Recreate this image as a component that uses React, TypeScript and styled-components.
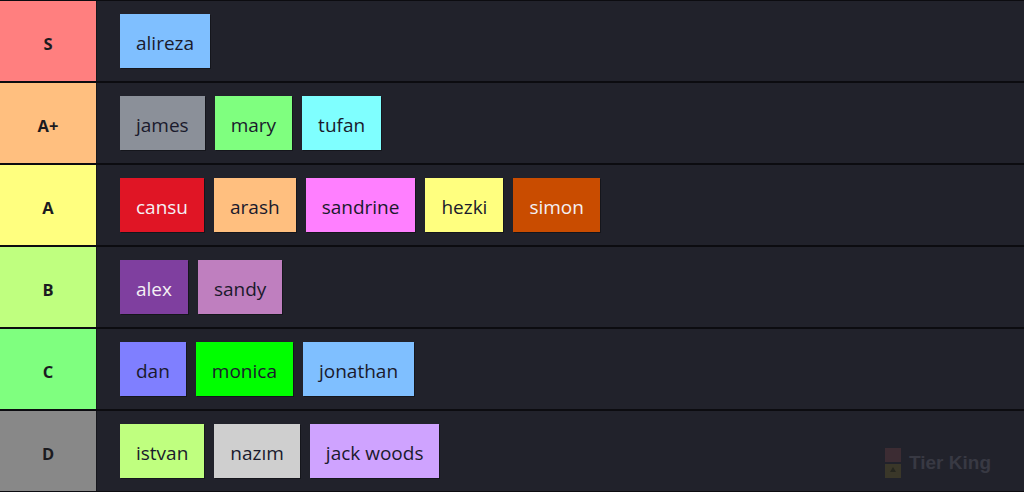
import { createGlobalStyle, styled } from 'styled-components';

const GlobalStyle = createGlobalStyle`
  html, body {
    margin: 0;
    padding: 0;
    background: #21222b;
  }
  body {
    font-family: 'Open Sans', 'Noto Sans', sans-serif;
  }
`;

const StyledBoard = styled.div`
  position: relative;
  display: flex;
  flex-direction: column;
  gap: 2px;
  width: 1024px;
  height: 492px;
  box-sizing: border-box;
  padding: 1px 0;
  background: #0c0c10;
  overflow: hidden;
`;

const StyledRow = styled.div`
  display: flex;
  height: 80px;
  background: #21222b;
`;

const StyledLabel = styled.div<{ $bg: string }>`
  display: flex;
  align-items: center;
  justify-content: center;
  width: 97px;
  flex-shrink: 0;
  padding-top: 4px;
  box-sizing: border-box;
  background: ${(p) => p.$bg};
  border-right: 1px solid #16171d;
  color: #1b1b1f;
  font-weight: 700;
  font-size: 16.5px;
`;

const StyledItems = styled.div`
  display: flex;
  align-items: center;
  gap: 10px;
  padding-left: 23px;
`;

const StyledTag = styled.div<{ $bg: string; $light?: boolean }>`
  display: flex;
  align-items: center;
  height: 54px;
  padding: 3px 16px 0;
  box-sizing: border-box;
  background: ${(p) => p.$bg};
  color: ${(p) => (p.$light ? '#f4f0f4' : '#1a1a2c')};
  font-size: 19px;
  box-shadow: 1px 1px 0 rgba(0, 0, 0, 0.35);
`;

const StyledWatermark = styled.div`
  position: absolute;
  right: 33px;
  bottom: 14px;
  display: flex;
  align-items: center;
  gap: 8px;
  color: #383943;
  font-family: 'Liberation Sans', Arial, sans-serif;
  font-weight: 700;
  font-size: 19px;
`;

interface Item {
  name: string;
  color: string;
  light?: boolean;
}

interface Tier {
  label: string;
  color: string;
  items: Item[];
}

const tiers: Tier[] = [
  { label: 'S', color: '#ff7f7f', items: [{ name: 'alireza', color: '#7fbfff' }] },
  {
    label: 'A+',
    color: '#ffbf7f',
    items: [
      { name: 'james', color: '#8b9099' },
      { name: 'mary', color: '#7fff7f' },
      { name: 'tufan', color: '#7fffff' },
    ],
  },
  {
    label: 'A',
    color: '#ffff7f',
    items: [
      { name: 'cansu', color: '#e01525', light: true },
      { name: 'arash', color: '#ffbf7f' },
      { name: 'sandrine', color: '#ff7fff' },
      { name: 'hezki', color: '#ffff7f' },
      { name: 'simon', color: '#c94c00', light: true },
    ],
  },
  {
    label: 'B',
    color: '#bfff7f',
    items: [
      { name: 'alex', color: '#7f3f9f', light: true },
      { name: 'sandy', color: '#bf7fbf' },
    ],
  },
  {
    label: 'C',
    color: '#7fff7f',
    items: [
      { name: 'dan', color: '#7f7fff' },
      { name: 'monica', color: '#00ff00' },
      { name: 'jonathan', color: '#7fbfff' },
    ],
  },
  {
    label: 'D',
    color: '#888888',
    items: [
      { name: 'istvan', color: '#bfff7f' },
      { name: 'nazım', color: '#cfcfcf' },
      { name: 'jack woods', color: '#cfa3ff' },
    ],
  },
];

const CrownMark = () => (
  <svg width="16" height="30" viewBox="0 0 16 30">
    <rect x="0" y="0" width="16" height="14" fill="#3c2c33" />
    <rect x="0" y="16" width="16" height="14" fill="#3a3729" />
    <polygon points="8,19 11,24 5,24" fill="#26261f" />
  </svg>
);

export default function App() {
  return (
    <>
      <GlobalStyle />
      <StyledBoard>
        {tiers.map((tier) => (
          <StyledRow key={tier.label}>
            <StyledLabel $bg={tier.color}>{tier.label}</StyledLabel>
            <StyledItems>
              {tier.items.map((item) => (
                <StyledTag key={item.name} $bg={item.color} $light={item.light}>
                  {item.name}
                </StyledTag>
              ))}
            </StyledItems>
          </StyledRow>
        ))}
        <StyledWatermark>
          <CrownMark />
          Tier King
        </StyledWatermark>
      </StyledBoard>
    </>
  );
}
